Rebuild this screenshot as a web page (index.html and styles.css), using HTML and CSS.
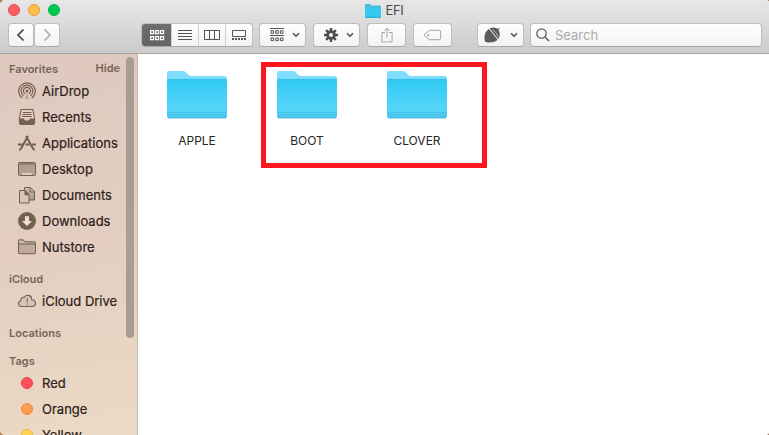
FILE: index.html
```html
<!DOCTYPE html>
<html lang="en">
<head>
<meta charset="utf-8">
<title>EFI</title>
<link rel="stylesheet" href="styles.css">
</head>
<body>
<svg class="defs" width="0" height="0">
  <defs>
    <linearGradient id="front" x1="0" y1="0" x2="0" y2="1">
      <stop offset="0" stop-color="#2fc9f3"/><stop offset="0.75" stop-color="#55d4f9"/><stop offset="1" stop-color="#50cdf3"/>
    </linearGradient>
    <linearGradient id="paper" x1="0" y1="0" x2="0" y2="1">
      <stop offset="0" stop-color="#75604f" stop-opacity=".15"/><stop offset="1" stop-color="#75604f" stop-opacity=".5"/>
    </linearGradient>
    <symbol id="folder" viewBox="0 0 62 50">
      <path d="M1 47V3.5Q1 1 3.5 1H17q1.500 0 2.500 1l3 3q1 1 2.500 1H58.500Q61 6 61 8.500V47z" fill="#7fdefe"/>
      <path d="M1 10.500Q1 9 3 9H59q2 0 2 1.500V46q0 2-2 2H3q-2 0-2-2z" fill="url(#front)"/>
      <path d="M1.500 9.300H60.500" stroke="#39bce5" stroke-width=".8"/>
      <path d="M1 42.500H61M1 44.500H61M1 46.300H61" stroke="#3fbbe2" stroke-width=".7"/>
      <path d="M2 48H60" stroke="#3ba9cd" stroke-width=".8"/>
    </symbol>
    <symbol id="chev" viewBox="0 0 8 6"><path d="M1 1.200l3 3 3-3" fill="none" stroke="#4d4d4d" stroke-width="1.500"/></symbol>
  </defs>
</svg>
<div class="window">
  <header class="chrome">
    <div class="titlebar">
      <div class="lights"><i class="light close"></i><i class="light min"></i><i class="light max"></i></div>
      <div class="title">
        <svg width="16" height="14" viewBox="0 0 16 14"><path d="M0 13V1.500Q0 0 1.500 0H5l1.500 1.500H15q1 0 1 1V13z" fill="#4fb9df"/><path d="M0 3.500H16V13q0 1-1 1H1q-1 0-1-1z" fill="#33caf4"/><path d="M0 13.300H16" stroke="#2f9fc4" stroke-width=".8"/></svg>
        <span>EFI</span>
      </div>
    </div>
    <div class="toolbar">
      <div class="btn nav"><svg width="10" height="14" viewBox="0 0 10 14"><path d="M7.500 1.500L2 7l5.500 5.500" fill="none" stroke="#444" stroke-width="1.700"/></svg></div>
      <div class="btn nav"><svg width="10" height="14" viewBox="0 0 10 14"><path d="M2.500 1.500L8 7l-5.500 5.500" fill="none" stroke="#aaa" stroke-width="1.600"/></svg></div>
      <div class="btn views">
        <span class="seg active"><svg width="16" height="12" viewBox="0 0 16 12" fill="none" stroke="#fff" stroke-width="1.200"><path d="M1.600 1.600h3v3h-3zM6.600 1.600h3v3h-3zM11.600 1.600h3v3h-3zM1.600 7.600h3v3h-3zM6.600 7.600h3v3h-3zM11.600 7.600h3v3h-3z"/></svg></span>
        <span class="seg"><svg width="14" height="12" viewBox="0 0 14 12"><path d="M0 1.500h14M0 4.500h14M0 7.500h14M0 10.500h14" stroke="#555"/></svg></span>
        <span class="seg"><svg width="16" height="12" viewBox="0 0 16 12"><path d="M.5 1.500h15v9H.5zM5.500 1.500v9M10.500 1.500v9" fill="none" stroke="#555"/></svg></span>
        <span class="seg"><svg width="14" height="12" viewBox="0 0 14 12"><path d="M.5 1.500h13v6H.5z" fill="none" stroke="#555"/><path d="M0 10h14" stroke="#555" stroke-width="1.800" stroke-dasharray="2 1"/></svg></span>
      </div>
      <div class="btn menu arrange"><svg width="14" height="14" viewBox="0 0 14 14" fill="none" stroke="#555"><path d="M0 .5h14M0 7.500h14M1 2.700h2.600v2.600H1zM5.700 2.700h2.600v2.600H5.700zM10.400 2.700h2.600v2.600h-2.600zM1 10h2.600v2.600H1zM5.700 10h2.600v2.600H5.700zM10.400 10h2.600v2.600h-2.600z"/></svg><svg class="chev"><use href="#chev"/></svg></div>
      <div class="btn menu gear"><svg width="14" height="14" viewBox="-7 -7 14 14"><circle r="3.400" fill="none" stroke="#4d4d4d" stroke-width="2.800"/><path d="M0-7V-4M0 7V4M-7 0h3M7 0H4M-4.900-4.900l2 2M4.900-4.900l-2 2M-4.900 4.900l2-2M4.900 4.900l-2-2" stroke="#4d4d4d" stroke-width="2.400"/></svg><svg class="chev"><use href="#chev"/></svg></div>
      <div class="btn small share"><svg width="12" height="16" viewBox="0 0 12 16" fill="none" stroke="#a5a5a5"><path d="M4 5.500H.9v9.400h10.200V5.500H8M6 11V1.200M3.200 4L6 1.200 8.800 4"/></svg></div>
      <div class="btn small tag"><svg width="18" height="12" viewBox="0 0 18 12" fill="none" stroke="#a5a5a5"><path d="M5.500 1.300H15q1.700 0 1.700 1.700v6q0 1.700-1.700 1.700H5.500L.9 7Q.2 6 .9 5z"/><circle cx="4.300" cy="6" r=".8"/></svg></div>
      <div class="btn menu nut"><svg width="17" height="16" viewBox="0 0 17 16"><path d="M.8 14.200C-.5 8 2 3.500 5 2L13.500 12.500C12 15.800 3 16.200.8 14.200z" fill="#5b5b5b"/><path d="M5.500 1.200C9-.3 12.500.6 14 2.300 16.500 5.500 16 9.500 14.200 12z" fill="#5b5b5b"/><path d="M13.500 2.500l2-1" stroke="#5b5b5b" stroke-width="1.200"/><path d="M8.500 2.500q4 2.500 5.500 7" stroke="#ddd" stroke-width=".7" fill="none"/></svg><svg class="chev"><use href="#chev"/></svg></div>
      <div class="btn search"><svg width="14" height="14" viewBox="0 0 14 14" fill="none" stroke="#555" stroke-width="1.200"><circle cx="5.500" cy="5.500" r="4.700"/><path d="M9 9l4 4"/></svg><span>Search</span></div>
    </div>
  </header>
  <div class="body">
    <aside class="sidebar">
      <h2>Favorites <span class="hide">Hide</span></h2>
      <div class="row"><svg class="ico" viewBox="0 0 18 18" fill="none" stroke="#75604f" stroke-width="1.200"><path d="M4.200 15.900a8.300 8.300 0 1 1 9.600 0M5.600 13.900a5.900 5.900 0 1 1 6.800 0M7 11.900a3.600 3.600 0 1 1 4 0"/><circle cx="9" cy="9" r="1.500" fill="#75604f" stroke="none"/><path d="M9 10.500L7 17h4z" fill="#75604f" stroke="none" opacity=".35"/></svg><span>AirDrop</span></div>
      <div class="row"><svg class="ico" viewBox="0 0 18 18"><path d="M3 1.500h12l1.500 9V15q0 1.500-1.500 1.500H3q-1.500 0-1.500-1.500v-4.500z" fill="#e4cfc2" stroke="#75604f" stroke-width="1.100"/><path d="M4.500 4.500h9M4.300 6.500h9.400M4.100 8.500h9.800" stroke="#75604f"/><path d="M1.500 10.500H6q.5 2 1.500 2h3q1 0 1.500-2h4.500V15q0 1.500-1.500 1.500H3q-1.500 0-1.500-1.500z" fill="#75604f"/></svg><span>Recents</span></div>
      <div class="row"><svg class="ico" viewBox="0 0 18 18" fill="none" stroke="#75604f"><path d="M10 2L2.500 15.500M8 2l7.500 13.500" stroke-width="2"/><path d="M0 10.500h5M7.500 10.500h4M14 10.500h4" stroke-width="2"/><path d="M2.500 14L1.500 17M15.500 14l1 3" stroke-width="1.200"/></svg><span>Applications</span></div>
      <div class="row"><svg class="ico" viewBox="0 0 18 18"><rect x=".5" y="2.500" width="17" height="13" rx="1" fill="#b39f92" stroke="#75604f"/><path d="M1 4h16" stroke="#75604f"/><path d="M4.500 14h9" stroke="#eddccf" stroke-width="2" stroke-dasharray="1.800 .6"/></svg><span>Desktop</span></div>
      <div class="row"><svg class="ico" viewBox="0 0 18 18" stroke="#75604f"><path d="M6.500 1.500h6l4 4v8.500h-10z" fill="url(#paper)"/><path d="M12 1.500V6h4.500" fill="none"/><path d="M1.500 4.500h6l3.500 4v8.500H1.500z" fill="#d9c5b7"/><path d="M7 4.500v4.300h4z" fill="#75604f"/></svg><span>Documents</span></div>
      <div class="row"><svg class="ico" viewBox="0 0 18 18"><circle cx="9" cy="9" r="9" fill="#75604f"/><path d="M7 4.200h4V9h3l-5 5-5-5h3z" fill="#f0e1d6"/></svg><span>Downloads</span></div>
      <div class="row"><svg class="ico" viewBox="0 0 18 18"><path d="M.5 15V2.500q0-.7.8-.7h4l1.400 2H16.700q.8 0 .8.700V15q0 .7-.8.700H1.300q-.8 0-.8-.7z" fill="#bfaa9b" stroke="#75604f"/><path d="M1 4.200h5.500" stroke="#e3d0c2"/><path d="M.5 6h17" stroke="#75604f"/></svg><span>Nutstore</span></div>
      <h2>iCloud</h2>
      <div class="row"><svg class="ico" viewBox="0 0 18 18"><path d="M4 14.500C-.5 14.300-.3 9.200 2.800 8.700 2.300 6 4.600 4.800 6 5.700 8 1.500 14 3 13.700 7.800 18.700 8 18.500 14.200 14.300 14.500z" fill="#d7c4b6" stroke="#75604f" stroke-width="1.100"/><path d="M9.200 6v4.500M9.200 11.500v1.300" stroke="#75604f"/></svg><span>iCloud Drive</span></div>
      <h2>Locations</h2>
      <h2>Tags</h2>
      <div class="row"><i class="dot red"></i><span>Red</span></div>
      <div class="row"><i class="dot orange"></i><span>Orange</span></div>
      <div class="row"><i class="dot yellow"></i><span>Yellow</span></div>
      <div class="scroll"></div>
    </aside>
    <main class="files">
      <div class="file"><svg class="big"><use href="#folder"/></svg><span>APPLE</span></div>
      <div class="file"><svg class="big"><use href="#folder"/></svg><span>BOOT</span></div>
      <div class="file"><svg class="big"><use href="#folder"/></svg><span>CLOVER</span></div>
      <div class="mark"></div>
    </main>
  </div>
</div>
</body>
</html>
```
FILE: styles.css
```css
* { box-sizing: border-box; }
body { margin: 0; background: #a8714f; font-family: Inter, "Liberation Sans", sans-serif; font-size: 13px; color: #262626; }
svg { display: block; flex: none; }
.defs { position: absolute; }
.window { width: 769px; height: 435px; border-radius: 5px 3px 3px 5px; overflow: hidden; background: #fff; display: flex; flex-direction: column; }
.chrome { height: 54px; flex: none; background: linear-gradient(#e7e7e7, #cbcbcb); border-bottom: 1px solid #a6a6a6; }
.titlebar { height: 23px; display: grid; grid-template-columns: 1fr auto 1fr; align-items: start; }
.lights { display: flex; gap: 8px; padding: 4px 0 0 8px; }
.light { width: 12px; height: 12px; border-radius: 50%; border: 1px solid; }
.close { background: #ff5f60; border-color: #e6474b; }
.min { background: #ffbd4a; border-color: #e4a038; }
.max { background: #00ca50; border-color: #00b344; }
.title { display: flex; gap: 4px; padding-top: 3px; color: #4a4a4a; line-height: 15px; letter-spacing: -.3px; }
.title svg { margin-top: 1px; }
.toolbar { display: flex; padding-left: 8px; height: 24px; }
.btn { height: 24px; border: 1px solid #bdbdbd; border-bottom-color: #a9a9a9; border-radius: 4px; background: linear-gradient(#fefefe, #f3f3f3); display: flex; align-items: center; justify-content: center; flex: none; }
.nav { width: 26px; }
.views { width: 112px; margin-left: 81px; overflow: hidden; justify-content: flex-start; }
.seg { width: 27px; height: 24px; display: flex; align-items: center; justify-content: center; border-left: 1px solid #cfcfcf; }
.seg.active { width: 29px; background: linear-gradient(#707070, #636363); border: 0; box-shadow: 0 0 0 1px #636363; }
.menu { width: 47px; padding: 0 5px 0 10px; justify-content: space-between; }
.chev { width: 8px; height: 6px; }
.arrange { margin-left: 6px; }
.gear { margin-left: 7px; }
.small { width: 39px; margin-left: 7px; }
.nut { margin-left: 25px; padding-left: 6px; }
.search { width: 232px; margin-left: 6px; justify-content: flex-start; padding-left: 5px; gap: 5px; color: #ababab; }
.body { flex: 1; min-height: 0; display: flex; }
.sidebar { position: relative; width: 138px; flex: none; border-right: 1px solid #c6b5a9; padding-top: 6px; overflow: hidden; background: linear-gradient(170deg, #dfc9bf, #e3cec1 50%, #ebdac5); }
.sidebar h2 { margin: 10px 0 0; height: 18px; padding: 0 17px 0 9px; display: flex; justify-content: space-between; align-items: center; font-size: 11px; font-weight: 600; color: #756558; }
.sidebar h2:first-child { margin-top: 0; }
.hide { margin-top: -2px; }
.row { height: 26px; padding-left: 18px; display: flex; align-items: center; gap: 6px; color: #2d2019; white-space: nowrap; -webkit-text-stroke: .2px; }
.ico { width: 18px; height: 18px; }
.dot { width: 12px; height: 12px; border-radius: 50%; margin: 0 3px; border: 1px solid; }
.red { background: #ff4f59; border-color: #ec3c49; }
.orange { background: #ff9d53; border-color: #ee873c; }
.yellow { background: #ffd052; border-color: #edb83e; }
.scroll { position: absolute; left: 126px; top: 3px; width: 8px; height: 281px; border-radius: 4px; background: #aa9c93; }
.files { position: relative; flex: 1; display: flex; padding: 16px 0 0 4px; }
.file { width: 110px; display: flex; flex-direction: column; align-items: center; font-size: 12px; }
.big { width: 62px; height: 50px; }
.file span { margin-top: 13px; line-height: 16px; }
.mark { position: absolute; left: 123px; top: 8px; width: 226px; height: 106px; border: 5px solid #ff1720; }
```
